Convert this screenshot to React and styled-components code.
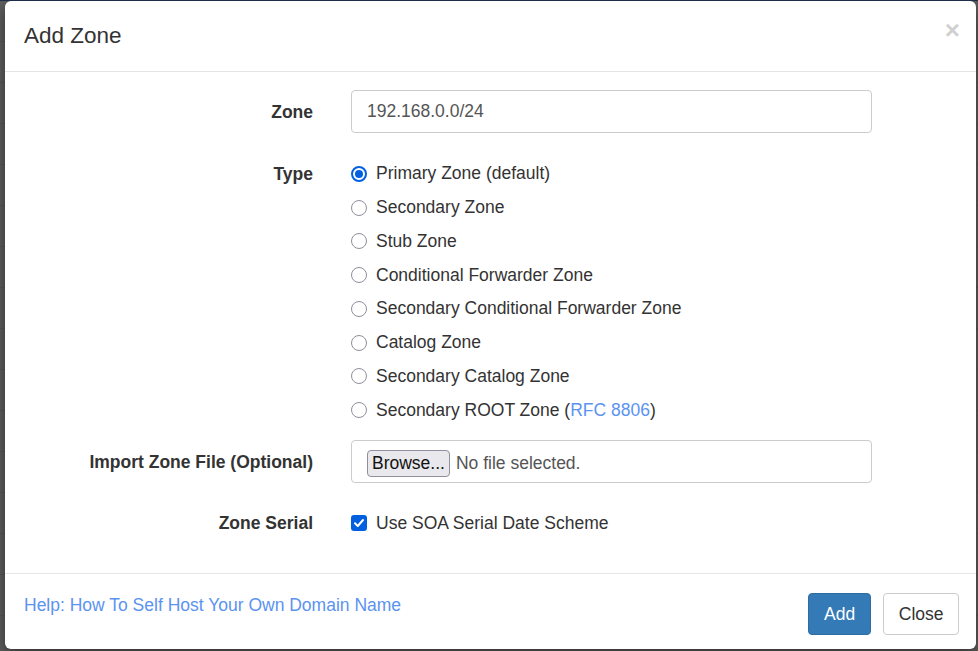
import React from "react";
import styled, { createGlobalStyle } from "styled-components";

const Global = createGlobalStyle`
  html, body { margin: 0; padding: 0; }
  body { font-family: "Liberation Sans", Arial, sans-serif; color: #333; background: #5e5e5e; }
`;

const Backdrop = styled.div`
  height: 651px;
  box-sizing: border-box;
  border-top: 1px solid #1f2e48;
  padding: 0 2px 0 5px;
  background: repeating-linear-gradient(180deg, #5f5f5f 0px, #5f5f5f 40px, #575757 40px, #575757 41px);
  overflow: hidden;
`;

const Modal = styled.div`
  width: 971px;
  height: 648px;
  background: #fff;
  border-radius: 6px;
  display: flex;
  flex-direction: column;
  box-shadow: 0 5px 15px rgba(0, 0, 0, 0.5);
`;

const Header = styled.div`
  height: 70px;
  border-bottom: 1px solid #e5e5e5;
  display: flex;
  align-items: center;
  justify-content: space-between;
  padding: 0 19px 0 19px;
`;

const Title = styled.h4`
  margin: 0;
  font-size: 22.5px;
  font-weight: 400;
  color: #333;
`;

const CloseX = styled.button`
  border: 0;
  background: none;
  padding: 0;
  font-family: "Liberation Sans", Arial, sans-serif;
  font-size: 26px;
  font-weight: 700;
  color: #000;
  opacity: 0.18;
  line-height: 1;
  align-self: flex-start;
  margin-top: 16px;
  margin-right: -3px;
`;

const Body = styled.div`
  height: 501px;
  box-sizing: border-box;
  padding-top: 18px;
  display: flex;
  flex-direction: column;
`;

const Row = styled.div`
  display: grid;
  grid-template-columns: 308px 521px;
  column-gap: 38px;
  align-items: ${(p) => (p.$top ? "start" : "center")};
  margin-top: ${(p) => p.$mt || 0}px;
`;

const Label = styled.label`
  text-align: right;
  font-weight: 700;
  font-size: 17.5px;
  line-height: 34px;
`;

const TextInput = styled.div`
  height: 43px;
  box-sizing: border-box;
  border: 1px solid #ccc;
  border-radius: 4px;
  padding: ${(p) => (p.$file ? "3px 15px 0" : "0 15px")};
  display: flex;
  align-items: center;
  gap: 6px;
  font-size: 17.5px;
  color: #555;
`;

const OptionList = styled.div`
  display: flex;
  flex-direction: column;
`;

const Option = styled.label`
  height: 33.75px;
  display: flex;
  align-items: center;
  gap: 9px;
  font-size: 17.5px;
  color: #333;
`;

const Radio = styled.span`
  width: 16px;
  height: 16px;
  box-sizing: border-box;
  border-radius: 50%;
  border: ${(p) => (p.$on ? "2px solid #0060df" : "1px solid #8f8f9d")};
  display: flex;
  align-items: center;
  justify-content: center;
  &::after {
    content: "";
    display: ${(p) => (p.$on ? "block" : "none")};
    width: 8px;
    height: 8px;
    border-radius: 50%;
    background: #0060df;
  }
`;

const Check = styled.span`
  width: 16px;
  height: 16px;
  box-sizing: border-box;
  border-radius: 3px;
  background: #0060df;
  display: flex;
  align-items: center;
  justify-content: center;
`;

const Link = styled.a`
  color: #5b93f0;
  text-decoration: none;
`;

const Browse = styled.span`
  height: 27px;
  box-sizing: border-box;
  padding: 0 4px;
  border: 1px solid #8f8f9d;
  border-radius: 4px;
  background: #e9e9ed;
  color: #111;
  display: flex;
  align-items: center;
  font-size: 17.5px;
`;

const Footer = styled.div`
  flex: 1;
  border-top: 1px solid #e5e5e5;
  display: flex;
  align-items: flex-start;
  justify-content: space-between;
  padding: 19px 17px 0 19px;
`;

const Help = styled(Link)`
  font-size: 17.5px;
  line-height: 24px;
`;

const Buttons = styled.div`
  display: flex;
  gap: 12px;
`;

const Btn = styled.button`
  height: 42px;
  box-sizing: border-box;
  border-radius: 4px;
  font-family: "Liberation Sans", Arial, sans-serif;
  font-size: 17.5px;
  padding: 0 ${(p) => (p.$primary ? 15 : 14.5)}px;
  border: 1px solid ${(p) => (p.$primary ? "#2e6da4" : "#ccc")};
  background: ${(p) => (p.$primary ? "#337ab7" : "#fff")};
  color: ${(p) => (p.$primary ? "#fff" : "#333")};
`;

const types = [
  "Primary Zone (default)",
  "Secondary Zone",
  "Stub Zone",
  "Conditional Forwarder Zone",
  "Secondary Conditional Forwarder Zone",
  "Catalog Zone",
  "Secondary Catalog Zone",
];

export default function App() {
  return (
    <>
      <Global />
      <Backdrop>
        <Modal>
          <Header>
            <Title>Add Zone</Title>
            <CloseX>×</CloseX>
          </Header>
          <Body>
            <Row>
              <Label>Zone</Label>
              <TextInput>192.168.0.0/24</TextInput>
            </Row>
            <Row $top $mt={24}>
              <Label>Type</Label>
              <OptionList>
                {types.map((t, i) => (
                  <Option key={t}>
                    <Radio $on={i === 0} />
                    {t}
                  </Option>
                ))}
                <Option>
                  <Radio />
                  <span>
                    Secondary ROOT Zone (<Link href="#">RFC 8806</Link>)
                  </span>
                </Option>
              </OptionList>
            </Row>
            <Row $mt={13}>
              <Label>Import Zone File (Optional)</Label>
              <TextInput $file>
                <Browse>Browse...</Browse>
                No file selected.
              </TextInput>
            </Row>
            <Row $mt={23}>
              <Label>Zone Serial</Label>
              <Option>
                <Check>
                  <svg width="12" height="12" viewBox="0 0 12 12">
                    <path d="M2 6.2 L4.8 9 L10 3" fill="none" stroke="#fff" strokeWidth="2" strokeLinecap="round" strokeLinejoin="round" />
                  </svg>
                </Check>
                Use SOA Serial Date Scheme
              </Option>
            </Row>
          </Body>
          <Footer>
            <Help href="#">Help: How To Self Host Your Own Domain Name</Help>
            <Buttons>
              <Btn $primary>Add</Btn>
              <Btn>Close</Btn>
            </Buttons>
          </Footer>
        </Modal>
      </Backdrop>
    </>
  );
}
